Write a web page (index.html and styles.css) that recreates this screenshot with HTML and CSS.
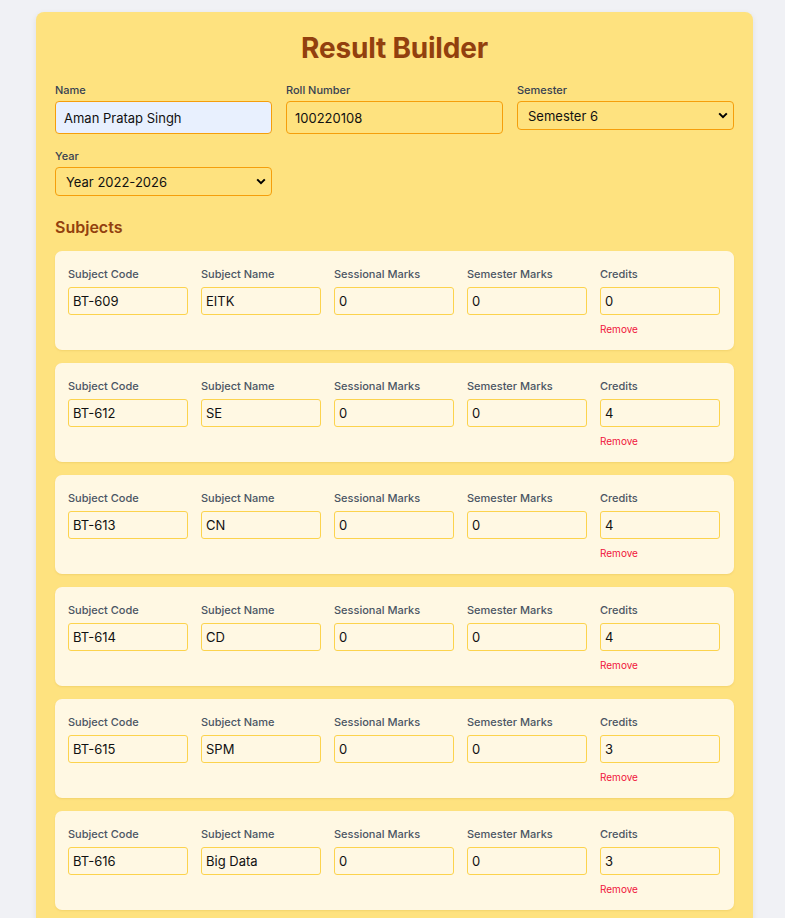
FILE: index.html
```html
<!DOCTYPE html>
<html>
<head>
<meta charset="utf-8">
<link rel="stylesheet" href="styles.css">
</head>
<body>
<div class="card">
  <h1 class="title">Result Builder</h1>
  <div class="info-grid">
    <div class="field">
      <label class="label">Name</label>
      <input class="input autofill" type="text" value="Aman Pratap Singh">
    </div>
    <div class="field">
      <label class="label">Roll Number</label>
      <input class="input" type="text" value="100220108">
    </div>
    <div class="field">
      <label class="label">Semester</label>
      <select class="select"><option>Semester 6</option></select>
    </div>
    <div class="field">
      <label class="label">Year</label>
      <select class="select"><option>Year 2022-2026</option></select>
    </div>
  </div>

  <h2 class="subjects-title">Subjects</h2>

  <div class="subjects">
    <div class="subject">
      <div class="sfield"><label class="slabel">Subject Code</label><input class="sinput" value="BT-609"></div>
      <div class="sfield"><label class="slabel">Subject Name</label><input class="sinput" value="EITK"></div>
      <div class="sfield"><label class="slabel">Sessional Marks</label><input class="sinput" value="0"></div>
      <div class="sfield"><label class="slabel">Semester Marks</label><input class="sinput" value="0"></div>
      <div class="sfield"><label class="slabel">Credits</label><input class="sinput" value="0"><button class="remove">Remove</button></div>
    </div>
    <div class="subject">
      <div class="sfield"><label class="slabel">Subject Code</label><input class="sinput" value="BT-612"></div>
      <div class="sfield"><label class="slabel">Subject Name</label><input class="sinput" value="SE"></div>
      <div class="sfield"><label class="slabel">Sessional Marks</label><input class="sinput" value="0"></div>
      <div class="sfield"><label class="slabel">Semester Marks</label><input class="sinput" value="0"></div>
      <div class="sfield"><label class="slabel">Credits</label><input class="sinput" value="4"><button class="remove">Remove</button></div>
    </div>
    <div class="subject">
      <div class="sfield"><label class="slabel">Subject Code</label><input class="sinput" value="BT-613"></div>
      <div class="sfield"><label class="slabel">Subject Name</label><input class="sinput" value="CN"></div>
      <div class="sfield"><label class="slabel">Sessional Marks</label><input class="sinput" value="0"></div>
      <div class="sfield"><label class="slabel">Semester Marks</label><input class="sinput" value="0"></div>
      <div class="sfield"><label class="slabel">Credits</label><input class="sinput" value="4"><button class="remove">Remove</button></div>
    </div>
    <div class="subject">
      <div class="sfield"><label class="slabel">Subject Code</label><input class="sinput" value="BT-614"></div>
      <div class="sfield"><label class="slabel">Subject Name</label><input class="sinput" value="CD"></div>
      <div class="sfield"><label class="slabel">Sessional Marks</label><input class="sinput" value="0"></div>
      <div class="sfield"><label class="slabel">Semester Marks</label><input class="sinput" value="0"></div>
      <div class="sfield"><label class="slabel">Credits</label><input class="sinput" value="4"><button class="remove">Remove</button></div>
    </div>
    <div class="subject">
      <div class="sfield"><label class="slabel">Subject Code</label><input class="sinput" value="BT-615"></div>
      <div class="sfield"><label class="slabel">Subject Name</label><input class="sinput" value="SPM"></div>
      <div class="sfield"><label class="slabel">Sessional Marks</label><input class="sinput" value="0"></div>
      <div class="sfield"><label class="slabel">Semester Marks</label><input class="sinput" value="0"></div>
      <div class="sfield"><label class="slabel">Credits</label><input class="sinput" value="3"><button class="remove">Remove</button></div>
    </div>
    <div class="subject">
      <div class="sfield"><label class="slabel">Subject Code</label><input class="sinput" value="BT-616"></div>
      <div class="sfield"><label class="slabel">Subject Name</label><input class="sinput" value="Big Data"></div>
      <div class="sfield"><label class="slabel">Sessional Marks</label><input class="sinput" value="0"></div>
      <div class="sfield"><label class="slabel">Semester Marks</label><input class="sinput" value="0"></div>
      <div class="sfield"><label class="slabel">Credits</label><input class="sinput" value="3"><button class="remove">Remove</button></div>
    </div>
  </div>
</div>
</body>
</html>
```

FILE: styles.css
```css
* { box-sizing: border-box; }
html, body {
  margin: 0;
  padding: 0;
  background: #f0f1f5;
  font-family: Inter, "Liberation Sans", sans-serif;
}
body { padding: 12px 0 40px; }
.card {
  width: 717px;
  margin: 0 0 0 36px;
  background: #fee27f;
  border-radius: 8px;
  padding: 16px 19px 24px 19px;
  box-shadow: 0 2px 6px rgba(0,0,0,0.08);
}
.title {
  margin: 0 0 15px;
  text-align: center;
  font-size: 28px;
  line-height: 40px;
  font-weight: 700;
  color: #92400e;
  letter-spacing: -0.2px;
}
.info-grid {
  display: grid;
  grid-template-columns: repeat(3, minmax(0, 1fr));
  column-gap: 14px;
  row-gap: 15px;
  align-items: start;
}
.field { display: flex; flex-direction: column; min-width: 0; }
.label {
  font-size: 11px;
  line-height: 14px;
  font-weight: 500;
  color: #374151;
  margin-bottom: 4px;
}
.input, .select {
  width: 100%;
  min-width: 0;
  font-family: Inter, "Liberation Sans", sans-serif;
  font-size: 13px;
  color: #111;
  border: 1px solid #f59e0b;
  border-radius: 4px;
  background-color: transparent;
  outline: none;
}
.input {
  height: 33px;
  padding: 0 8px;
}
.input.autofill { background-color: #e8f0fe; }
.select {
  height: 29px;
  padding: 0 26px 0 10px;
  appearance: none;
  -webkit-appearance: none;
  background-image: url("data:image/svg+xml;utf8,<svg xmlns='http://www.w3.org/2000/svg' width='10' height='7' viewBox='0 0 10 7'><path d='M1.2 1.4 L5 5.2 L8.8 1.4' fill='none' stroke='black' stroke-width='2'/></svg>");
  background-repeat: no-repeat;
  background-position: right 5px center;
  background-size: 10px 7px;
}
.subjects-title {
  margin: 21px 0 14px;
  font-size: 16px;
  line-height: 20px;
  font-weight: 600;
  color: #92400e;
}
.subjects { display: flex; flex-direction: column; gap: 13px; }
.subject {
  background: #fff8e3;
  border-radius: 7px;
  padding: 16px 14px 15px 13px;
  display: grid;
  grid-template-columns: repeat(5, minmax(0, 1fr));
  column-gap: 13px;
  box-shadow: 0 1px 2px rgba(180,130,0,0.15);
}
.sfield { display: flex; flex-direction: column; align-items: stretch; min-width: 0; }
.slabel {
  font-size: 11px;
  line-height: 14px;
  font-weight: 500;
  color: #4b5563;
  margin-bottom: 6px;
}
.sinput {
  width: 100%;
  min-width: 0;
  height: 28px;
  border: 1px solid #fcd34d;
  border-radius: 3px;
  background: transparent;
  font-family: Inter, "Liberation Sans", sans-serif;
  font-size: 13px;
  color: #111;
  padding: 0 4px;
  outline: none;
}
.remove {
  align-self: flex-start;
  margin-top: 8px;
  padding: 0;
  border: none;
  background: none;
  font-family: Inter, "Liberation Sans", sans-serif;
  font-size: 10px;
  line-height: 12px;
  color: #f0143c;
  cursor: pointer;
}
```
